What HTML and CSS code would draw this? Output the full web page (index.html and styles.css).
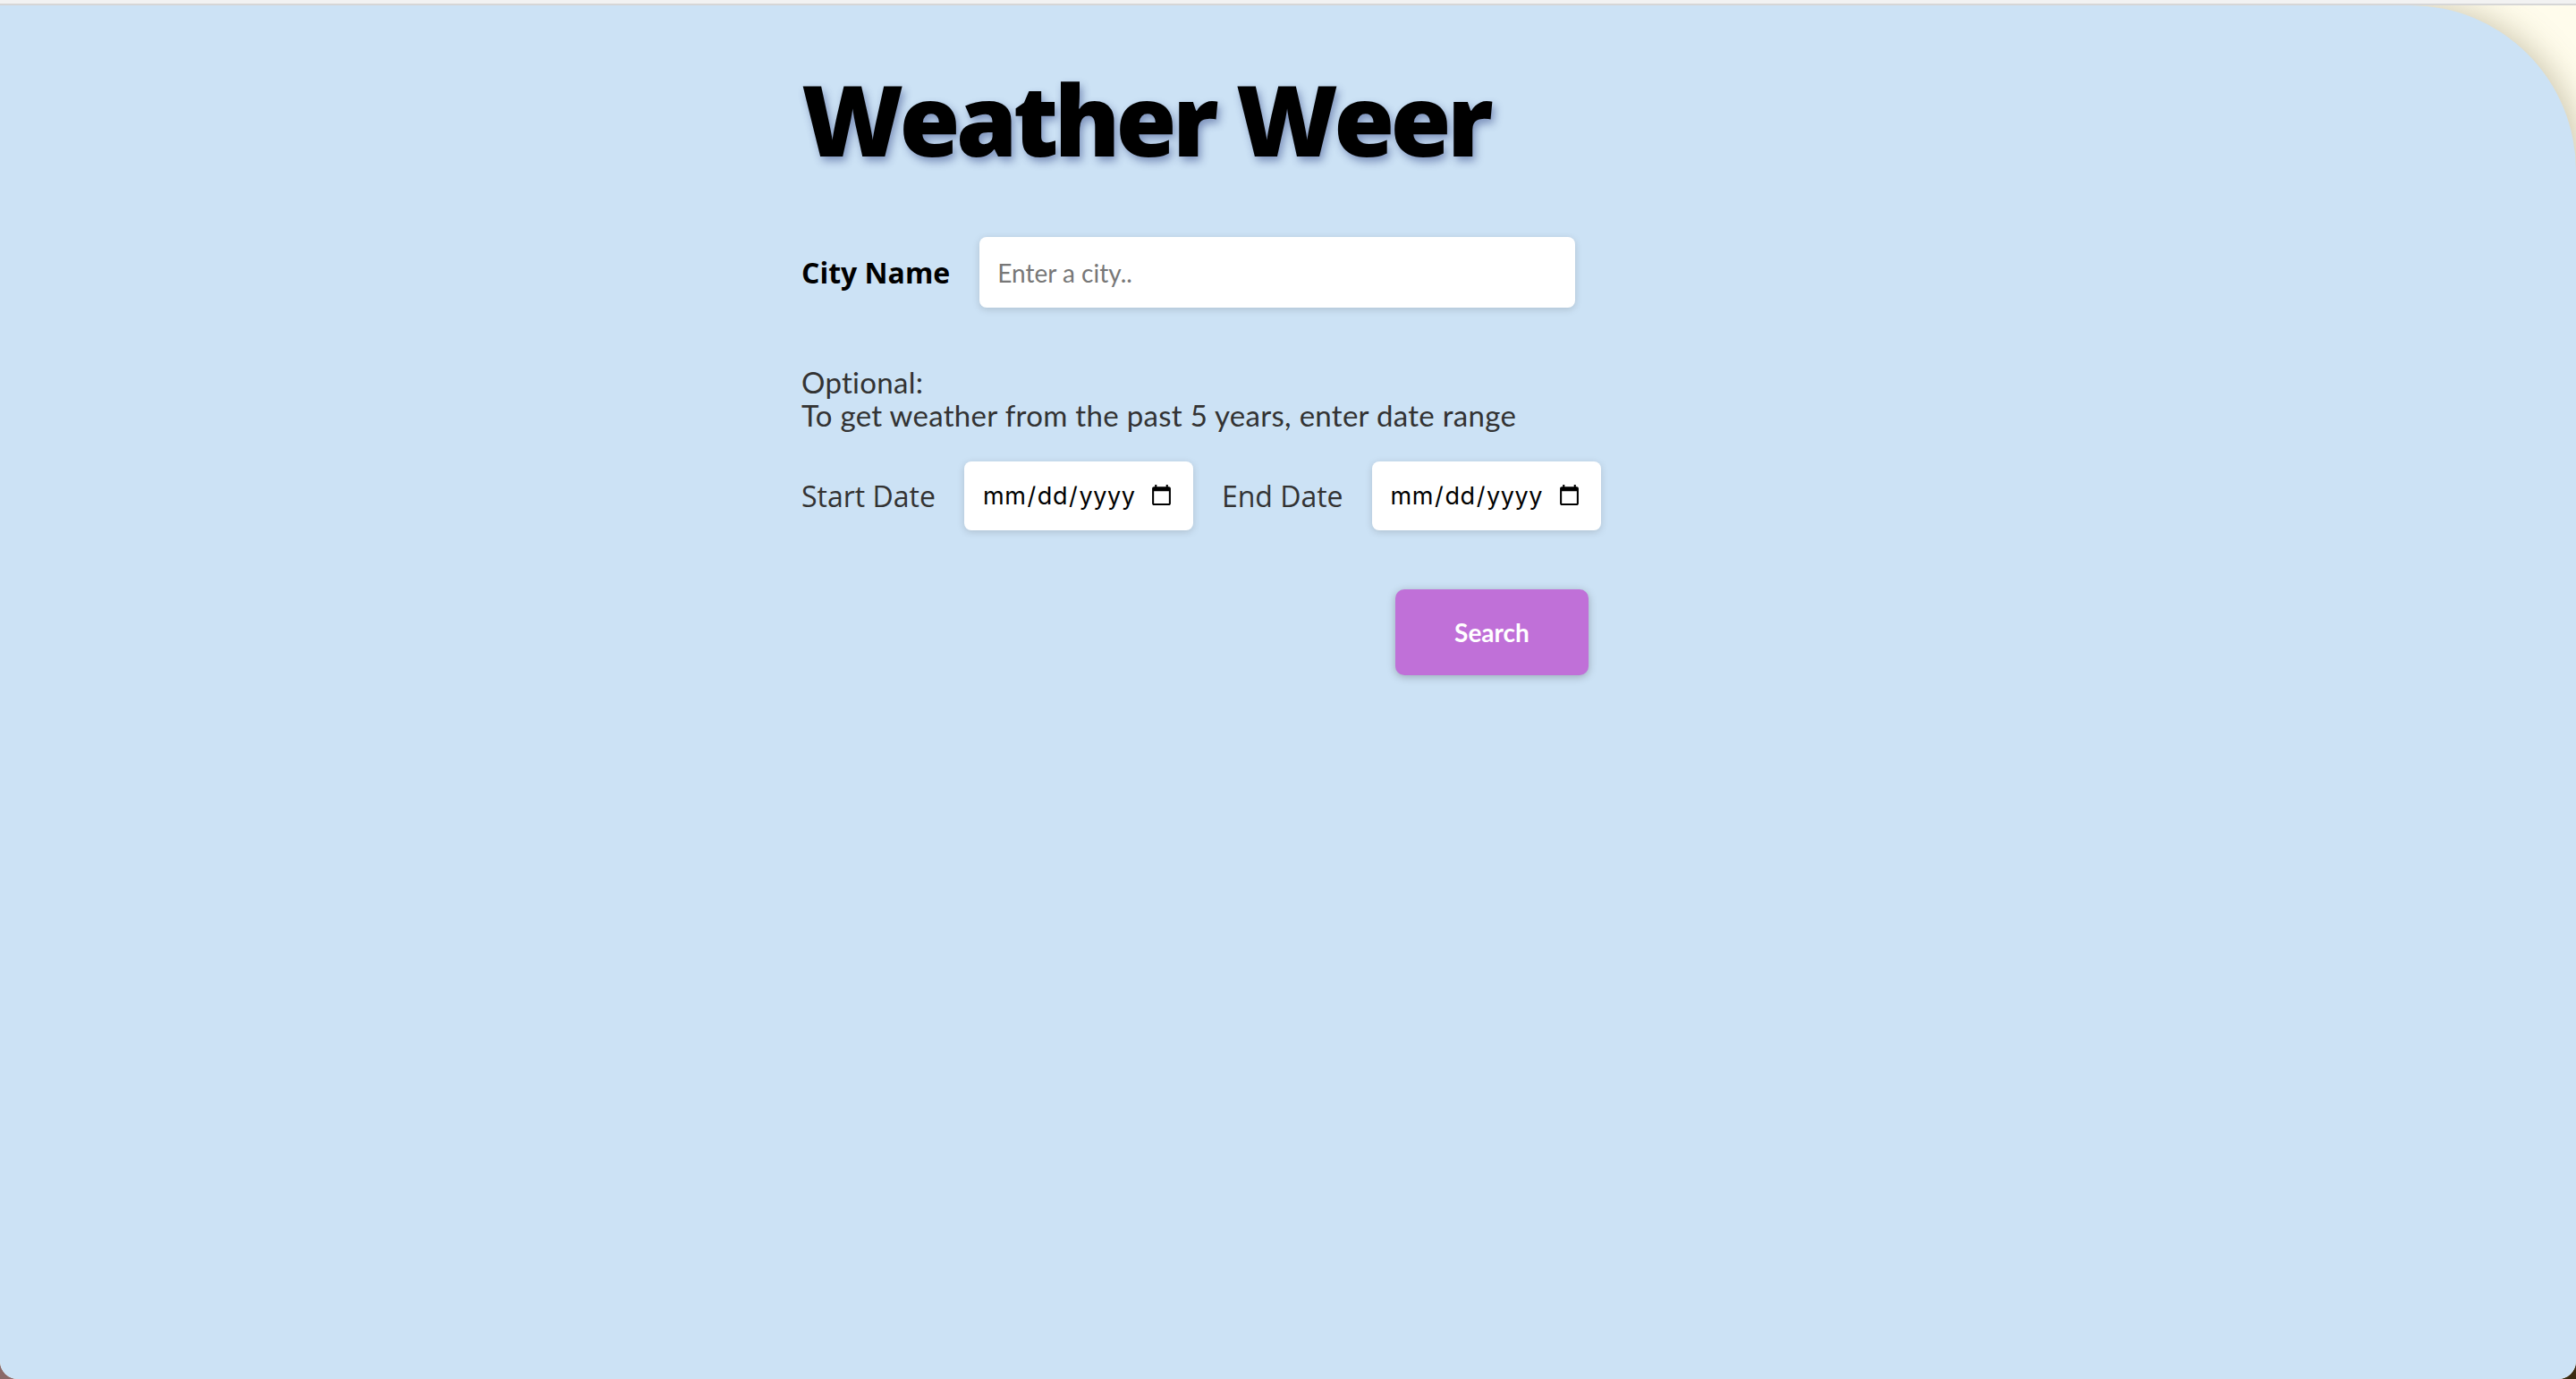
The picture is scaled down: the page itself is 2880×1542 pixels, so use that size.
FILE: index.html
```html
<!DOCTYPE html>
<html lang="en">
<head>
<meta charset="utf-8">
<title>Weather Weer</title>
<link rel="stylesheet" href="styles.css">
</head>
<body>
<div class="window">
  <div class="topbar"></div>
  <main class="page">
    <div class="container">
      <h1 class="title">Weather Weer</h1>
      <div class="city-row">
        <label class="city-label" for="city">City Name</label>
        <input id="city" class="city-input" type="text" placeholder="Enter a city..">
      </div>
      <p class="optional">Optional:<br>To get weather from the past 5 years, enter date range</p>
      <div class="date-row">
        <label class="date-label" for="start">Start Date</label>
        <input id="start" type="date" class="date-input">
        <label class="date-label" for="end">End Date</label>
        <input id="end" type="date" class="date-input">
      </div>
      <div class="search-row">
        <button class="search-btn" type="button">Search</button>
      </div>
    </div>
  </main>
</div>
</body>
</html>
```

FILE: styles.css
```css
html, body {
  margin: 0;
  height: 100%;
}

body {
  background: linear-gradient(90deg, #8a6868, #3b2b12);
}

.window {
  height: 100vh;
  display: flex;
  flex-direction: column;
  background: #fffcec;
  border-radius: 0 0 20px 20px;
  overflow: hidden;
}

.topbar {
  flex: none;
  height: 4px;
  background: #f2f2f2;
  border-bottom: 2px solid #d6d6d6;
  position: relative;
  z-index: 1;
}

.page {
  flex: 1;
  background: #cce2f5;
  border-top-right-radius: 185px;
  box-shadow: 6px 0 36px rgba(110, 100, 60, 0.35);
}

.container {
  width: 1088px;
  margin: 0 auto;
  padding-top: 66px;
}

.title {
  margin: 0;
  font-family: "Open Sans", sans-serif;
  font-weight: 800;
  font-size: 110px;
  line-height: 120px;
  letter-spacing: -4.7px;
  color: #000;
  text-shadow: 3px 5px 10px rgba(30, 50, 120, 0.45);
}

.city-row {
  margin-top: 73px;
  display: flex;
  align-items: center;
  gap: 33px;
}

.city-label {
  font-family: "Open Sans", sans-serif;
  font-weight: 700;
  font-size: 32px;
  color: #000;
}

.city-input {
  width: 666px;
  height: 79px;
  box-sizing: border-box;
  border: none;
  border-radius: 8px;
  padding: 0 20px;
  background: #fff;
  font-family: Lato, sans-serif;
  font-size: 28px;
  color: #222;
  outline: none;
  box-shadow: 0 2px 8px rgba(0, 0, 0, 0.15);
}

.city-input::placeholder {
  color: #777;
}

.optional {
  margin: 65px 0 0;
  font-family: Lato, sans-serif;
  font-size: 33px;
  line-height: 37px;
  letter-spacing: 0.3px;
  color: #333;
}

.date-row {
  margin-top: 33px;
  display: flex;
  align-items: center;
  gap: 32px;
}

.date-label {
  font-family: "Open Sans", sans-serif;
  font-size: 32px;
  color: #333;
}

.date-input {
  width: 256px;
  height: 77px;
  box-sizing: border-box;
  border: none;
  border-radius: 8px;
  padding: 0 20px;
  background: #fff;
  font-family: Inter, sans-serif;
  font-size: 27px;
  letter-spacing: 0.6px;
  color: #000;
  outline: none;
  box-shadow: 0 2px 8px rgba(0, 0, 0, 0.15);
}

.search-row {
  margin-top: 66px;
  display: flex;
  justify-content: flex-end;
  padding-right: 208px;
}

.search-btn {
  width: 216px;
  height: 96px;
  border: none;
  border-radius: 10px;
  background: #c070d8;
  color: #fff;
  font-family: Lato, sans-serif;
  font-weight: 700;
  font-size: 28px;
  box-shadow: 0 2px 10px rgba(0, 0, 0, 0.25);
  cursor: pointer;
}
```
